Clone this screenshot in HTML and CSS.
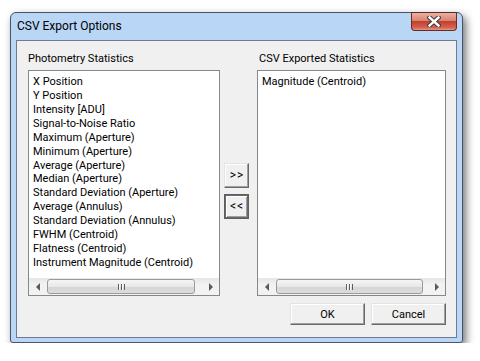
FILE: index.html
```
<!DOCTYPE html>
<html>
<head>
<meta charset="utf-8">
<link rel="stylesheet" href="styles.css">
</head>
<body>
<div class="window">
  <div class="titlebar">
    <span class="title">CSV Export Options</span>
    <div class="close">
      <svg width="14" height="11" viewBox="0 0 14 11">
        <path d="M2.5 1.5 L11.5 9.5 M11.5 1.5 L2.5 9.5" stroke="#3b3b3b" stroke-width="4.4" stroke-linecap="square"/>
        <path d="M2.5 1.5 L11.5 9.5 M11.5 1.5 L2.5 9.5" stroke="#ffffff" stroke-width="2.4" stroke-linecap="square"/>
      </svg>
    </div>
  </div>
  <div class="client">
    <div class="panes">
      <div class="col">
        <div class="label">Photometry Statistics</div>
        <div class="listbox">
          <ul class="items">
            <li>X Position</li>
            <li>Y Position</li>
            <li>Intensity [ADU]</li>
            <li>Signal-to-Noise Ratio</li>
            <li>Maximum (Aperture)</li>
            <li>Minimum (Aperture)</li>
            <li>Average (Aperture)</li>
            <li>Median (Aperture)</li>
            <li>Standard Deviation (Aperture)</li>
            <li>Average (Annulus)</li>
            <li>Standard Deviation (Annulus)</li>
            <li>FWHM (Centroid)</li>
            <li>Flatness (Centroid)</li>
            <li>Instrument Magnitude (Centroid)</li>
          </ul>
          <div class="hscroll">
            <div class="arrow"><span class="tri-left"></span></div>
            <div class="track"><div class="thumb" style="width:148px"><span class="grip"></span></div></div>
            <div class="arrow"><span class="tri-right"></span></div>
          </div>
        </div>
      </div>
      <div class="mid">
        <div class="btn small">&gt;&gt;</div>
        <div class="btn small focused">&lt;&lt;</div>
      </div>
      <div class="col right">
        <div class="label indent">CSV Exported Statistics</div>
        <div class="listbox">
          <ul class="items">
            <li>Magnitude (Centroid)</li>
          </ul>
          <div class="hscroll">
            <div class="arrow"><span class="tri-left"></span></div>
            <div class="track"><div class="thumb" style="width:147px"><span class="grip"></span></div></div>
            <div class="arrow"><span class="tri-right"></span></div>
          </div>
        </div>
      </div>
    </div>
    <div class="footer">
      <div class="btn wide">OK</div>
      <div class="btn wide">Cancel</div>
    </div>
  </div>
</div>
</body>
</html>
```
FILE: styles.css
```
* { box-sizing: border-box; }
html, body { margin: 0; padding: 0; background: #ffffff; }
body {
  font-family: Roboto, "Liberation Sans", sans-serif;
  font-size: 11px;
  color: #000;
}
.window {
  margin: 12px 0 0 10px;
  width: 453px;
  height: 331px;
  border: 1px solid #48546a;
  border-radius: 6px 6px 3px 3px;
  background: #b9d6f6;
  padding: 0 5px 5px 5px;
  box-shadow: 3px 4px 8px rgba(0,0,0,0.55);
}
.titlebar {
  height: 27px;
  display: flex;
  justify-content: space-between;
  align-items: flex-start;
}
.title {
  padding-left: 1px;
  line-height: 27px;
  font-size: 12px;
  color: #000;
}
.close {
  margin-top: -1px;
  width: 46px;
  height: 19px;
  border: 1px solid #6b2a22;
  border-top-color: #5a2a24;
  border-radius: 0 0 4px 4px;
  background: linear-gradient(#eab1a4 0%, #d98471 45%, #c2402c 50%, #d46250 85%, #e29a84 100%);
  display: flex;
  align-items: center;
  justify-content: center;
}
.client {
  height: 298px;
  border: 1px solid #6e7c8e;
  background: #f0f0f0;
  padding: 10px 10px 0 11px;
}
.panes {
  display: grid;
  grid-template-columns: 192px 25px 193px;
  column-gap: 4px;
  align-items: start;
}
.col.right { padding-left: 4px; }
.label {
  height: 15px;
  line-height: 14px;
  padding-top: 1px;
  margin-bottom: 4px;
}
.label.indent { padding-left: 2px; }
.listbox {
  height: 226px;
  border: 1px solid #828790;
  background: #fff;
  display: flex;
  flex-direction: column;
}
.items {
  list-style: none;
  margin: 0;
  padding: 4px 0 0 4px;
  flex: 1;
}
.items li {
  height: 13.93px;
  line-height: 14px;
  white-space: nowrap;
}
.hscroll {
  height: 17px;
  display: flex;
  background: linear-gradient(#e6e6e6, #f2f2f2 40%, #f2f2f2);
}
.arrow {
  width: 17px;
  display: flex;
  align-items: center;
  justify-content: center;
}
.tri-left {
  width: 0; height: 0;
  border-top: 4px solid transparent;
  border-bottom: 4px solid transparent;
  border-right: 4px solid #5a5a5a;
}
.tri-right {
  width: 0; height: 0;
  border-top: 4px solid transparent;
  border-bottom: 4px solid transparent;
  border-left: 4px solid #5a5a5a;
}
.track {
  flex: 1;
  padding: 1px 0 0 1px;
}
.thumb {
  height: 15px;
  border: 1px solid #9a9a9a;
  border-radius: 3px;
  background: linear-gradient(#f5f5f5, #e8e8e8 50%, #d6d6d6 51%, #dcdcdc);
  display: flex;
  align-items: center;
  justify-content: center;
}
.grip {
  width: 7px;
  height: 6px;
  background: repeating-linear-gradient(90deg, #5d5d5d 0 1px, #fafafa 1px 2px, transparent 2px 3px);
}
.mid {
  padding-top: 112px;
  display: flex;
  flex-direction: column;
  gap: 6px;
}
.btn {
  display: flex;
  align-items: center;
  justify-content: center;
  background: #f0f0f0;
  border: 1px solid;
  border-color: #e3e3e3 #696969 #696969 #e3e3e3;
  box-shadow: inset -1px -1px 0 #a0a0a0, inset 1px 1px 0 #ffffff;
  color: #000;
}
.btn.small {
  width: 25px;
  height: 25px;
  padding-bottom: 1px;
  font-size: 12px;
  letter-spacing: 1px;
  padding-left: 1px;
}
.btn.focused {
  border: 1px solid #5e5e5e;
  box-shadow: inset 1px 1px 0 #696969, inset -1px -1px 0 #696969, inset 2px 2px 0 #ffffff, inset -2px -2px 0 #a0a0a0;
}
.footer {
  margin-top: 7px;
  display: flex;
  justify-content: flex-end;
  gap: 6px;
}
.btn.wide {
  width: 75px;
  height: 22px;
}
```
